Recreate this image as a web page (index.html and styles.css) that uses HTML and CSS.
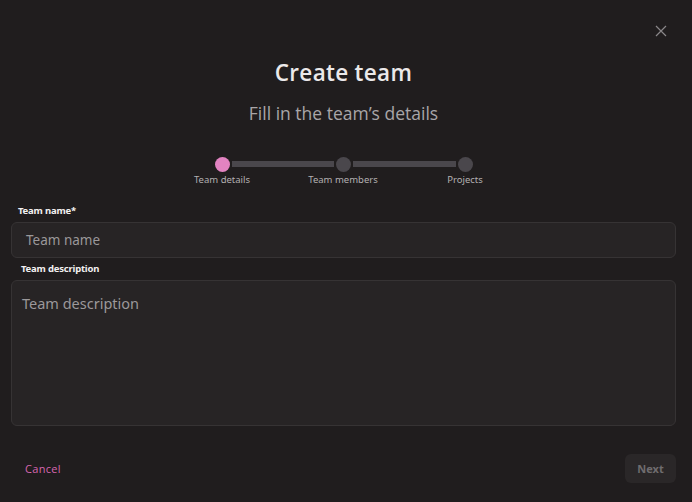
FILE: index.html
```html
<!DOCTYPE html>
<html>
<head>
<meta charset="utf-8">
<link rel="stylesheet" href="styles.css">
</head>
<body>
<div class="modal">
  <div class="top">
    <button class="close" aria-label="Close">
      <svg width="12" height="12" viewBox="0 0 12 12"><path d="M1 1L11 11M11 1L1 11" stroke="#8a8789" stroke-width="1.2" fill="none"/></svg>
    </button>
  </div>
  <h1 class="title">Create team</h1>
  <p class="subtitle">Fill in the team’s details</p>
  <div class="stepper">
    <div class="step active"><span class="dot"></span><span class="step-label">Team details</span></div>
    <div class="bar"></div>
    <div class="step"><span class="dot"></span><span class="step-label">Team members</span></div>
    <div class="bar bar-wide"></div>
    <div class="step"><span class="dot"></span><span class="step-label">Projects</span></div>
  </div>
  <form class="form">
    <label class="label label-name">Team name*</label>
    <div class="input">Team name</div>
    <label class="label label-desc">Team description</label>
    <div class="textarea">Team description</div>
  </form>
  <div class="footer">
    <a class="cancel">Cancel</a>
    <button class="next">Next</button>
  </div>
</div>
</body>
</html>
```
FILE: styles.css
```css
* { box-sizing: border-box; }
html, body { margin: 0; padding: 0; }
body {
  background: #201d1e;
  width: 692px;
  height: 502px;
  overflow: hidden;
  font-family: "Open Sans", "Noto Sans", sans-serif;
}
.modal {
  display: flex;
  flex-direction: column;
  padding: 0 16px 0 11px;
}
.top {
  display: flex;
  justify-content: flex-end;
  padding-top: 24px;
  height: 38px;
}
.close {
  background: none;
  border: 0;
  padding: 0;
  margin-right: 8px;
  width: 14px;
  height: 14px;
  display: flex;
  align-items: center;
  justify-content: center;
}
.title {
  margin: 20px 0 0;
  text-align: center;
  font-size: 22.5px;
  font-weight: 600;
  color: #ebe9ea;
  line-height: 30px;
  letter-spacing: 0.3px;
}
.subtitle {
  margin: 13px 0 0;
  text-align: center;
  font-size: 17.5px;
  font-weight: 400;
  color: #a9a6a8;
  line-height: 24px;
}
.stepper {
  display: flex;
  justify-content: center;
  align-items: flex-start;
  margin-top: 32px;
  height: 48px;
}
.step {
  width: 15px;
  display: flex;
  flex-direction: column;
  align-items: center;
}
.dot {
  width: 15px;
  height: 15px;
  border-radius: 50%;
  background: #4a474c;
}
.step.active .dot { background: #e283c1; }
.step-label {
  white-space: nowrap;
  font-size: 9.5px;
  line-height: 12px;
  margin-top: 2px;
  color: #b3b0b2;
  font-family: "Noto Sans", sans-serif;
}
.bar {
  width: 102px;
  height: 6px;
  margin: 4px 2px 0;
  background: #4a474c;
}
.bar-wide { width: 103px; }
.form {
  display: flex;
  flex-direction: column;
}
.label {
  font-size: 9.5px;
  font-weight: 700;
  color: #f2f0f1;
  line-height: 12px;
  font-family: "Noto Sans", sans-serif;
  letter-spacing: -0.2px;
}
.label-name { margin-left: 7px; margin-bottom: 5px; }
.label-desc { margin-left: 10px; margin-top: 5px; margin-bottom: 5px; }
.input, .textarea {
  background: #272425;
  border: 1px solid #363334;
  border-radius: 6px;
  color: #9b989a;
  font-family: "Noto Sans", sans-serif;
}
.input {
  height: 36px;
  font-size: 13.5px;
  line-height: 34px;
  padding-left: 14px;
}
.textarea {
  height: 146px;
  font-size: 14.5px;
  line-height: 20px;
  padding: 12px 10px;
}
.footer {
  display: flex;
  justify-content: space-between;
  align-items: center;
  margin-top: 28px;
}
.cancel {
  margin-left: 14px;
  color: #d766b0;
  font-size: 11px;
  letter-spacing: 0.3px;
}
.next {
  width: 51px;
  height: 29px;
  border: 0;
  border-radius: 6px;
  background: #2a2728;
  color: #6f6c6e;
  font-weight: 700;
  font-size: 11px;
  font-family: "Noto Sans", sans-serif;
}
```
